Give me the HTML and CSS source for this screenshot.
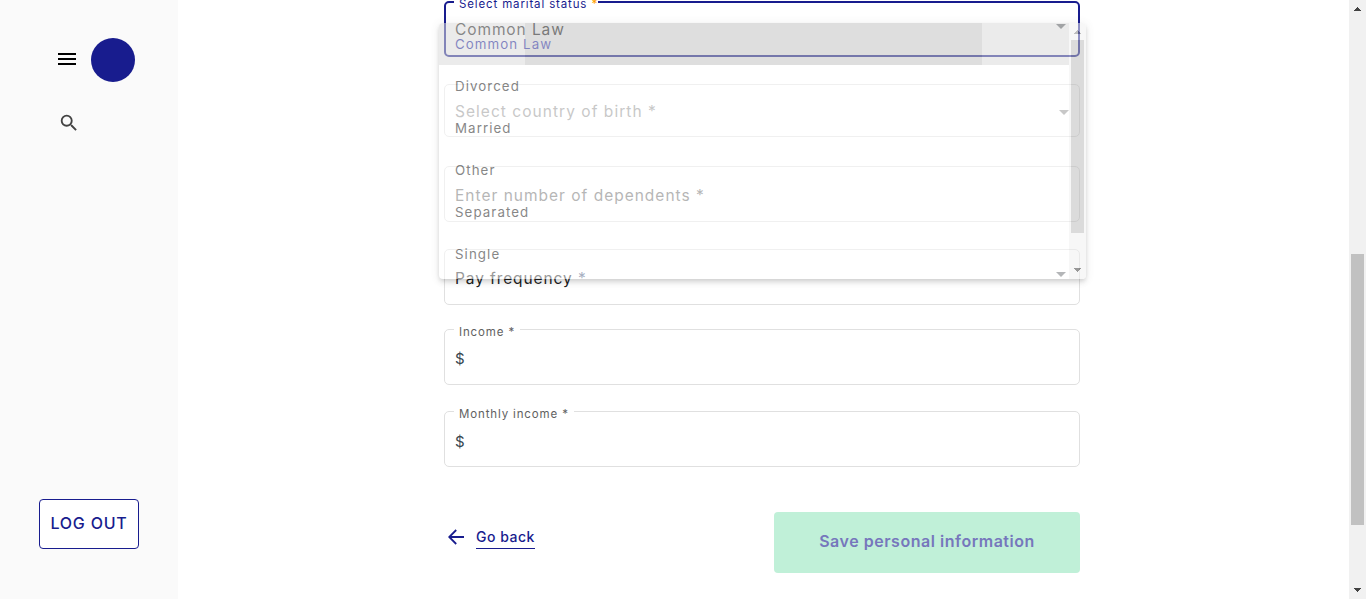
FILE: index.html
```html
<!DOCTYPE html>
<html lang="en">
<head>
<meta charset="utf-8">
<title>Personal information</title>
<link rel="stylesheet" href="styles.css">
</head>
<body>
<div class="app">
  <aside class="sidebar">
    <div class="brand">
      <svg class="menu-icon" width="18" height="12" viewBox="0 0 18 12"><path d="M0 0h18v2H0zM0 5h18v2H0zM0 10h18v2H0z"/></svg>
      <span class="avatar"></span>
    </div>
    <svg class="search-icon" width="22" height="22" viewBox="0 0 24 24"><path d="M15.5 14h-.79l-.28-.27A6.471 6.471 0 0 0 16 9.5 6.5 6.5 0 1 0 9.5 16c1.61 0 3.09-.59 4.23-1.57l.27.28v.79l5 4.99L20.49 19l-4.99-5zm-6 0C7.01 14 5 11.99 5 9.5S7.01 5 9.5 5 14 7.01 14 9.5 11.99 14 9.5 14z"/></svg>
    <button class="logout">LOG OUT</button>
  </aside>
  <main class="content">
    <form class="form">
      <div class="field focused">
        <span class="label">Select marital status <b class="star">*</b></span>
        <span class="value">Common Law</span><i class="caret"></i>
      </div>
      <div class="field country">
        <span class="value faded">Select country of birth *</span><i class="caret"></i>
      </div>
      <div class="field dependents"><span class="value muted">Enter number of dependents *</span></div>
      <div class="field frequency"><span class="value">Pay frequency <span class="mark">*</span></span><i class="caret"></i></div>
      <div class="field income"><span class="label">Income *</span><span class="value money">$</span></div>
      <div class="field monthly"><span class="label">Monthly income *</span><span class="value money">$</span></div>
      <div class="actions">
        <a class="back"><svg width="16" height="16" viewBox="0 0 16 16"><path d="M16 8H1.5M8.2 1 1.2 8l7 7"/></svg><span>Go back</span></a>
        <button class="save" type="button">Save personal information</button>
      </div>
    </form>
    <div class="panel">
      <div class="options">
        <div class="option selected"><i class="ripple"></i><span>Common Law</span></div>
        <div class="option">Divorced</div>
        <div class="option">Married</div>
        <div class="option">Other</div>
        <div class="option">Separated</div>
        <div class="option">Single</div>
      </div>
      <div class="scroll">
        <svg class="arrow dim" width="7" height="4" viewBox="0 0 7 4"><path d="M3 0h1v1h1v1h1v1h1v1H0V3h1V2h1V1h1z"/></svg>
        <i class="thumb"></i>
        <svg class="arrow" width="7" height="4" viewBox="0 0 7 4"><path d="M0 0h7v1H6v1H5v1H4v1H3V3H2V2H1V1H0z"/></svg>
      </div>
    </div>
  </main>
  <div class="page-scroll">
    <svg class="arrow" width="7" height="4" viewBox="0 0 7 4"><path d="M3 0h1v1h1v1h1v1h1v1H0V3h1V2h1V1h1z"/></svg>
    <i class="page-thumb"></i>
    <svg class="arrow" width="7" height="4" viewBox="0 0 7 4"><path d="M0 0h7v1H6v1H5v1H4v1H3V3H2V2H1V1H0z"/></svg>
  </div>
</div>
</body>
</html>
```
FILE: styles.css
```css
* { box-sizing: border-box; }
body { margin: 0; font-family: Inter, "Liberation Sans", sans-serif; color: #212121; background: #fff; overflow: hidden; }
svg { display: block; }
button { font-family: inherit; }
.app { display: flex; height: 599px; }
.sidebar { width: 178px; background: #fafafa; display: flex; flex-direction: column; padding: 38px 39px 50px; }
.brand { display: flex; align-items: center; gap: 15px; padding-left: 19px; }
.menu-icon { margin-top: -2px; }
.avatar { width: 44px; height: 44px; border-radius: 50%; background: #181c8e; }
.search-icon { margin: 30px 0 0 19px; fill: #424242; }
.logout { margin-top: auto; width: 100px; height: 50px; padding: 0 0 2px; border: 1px solid #181c8e; border-radius: 4px; background: #fff; color: #181c8e; font-size: 16px; font-weight: 500; letter-spacing: .8px; white-space: nowrap; }
.content { position: relative; flex: 1; padding: 1px 0 0 266px; }
.form { width: 636px; }
.field { position: relative; height: 56px; border: 1px solid #e0e0e0; border-radius: 5px; display: flex; justify-content: space-between; padding: 0 13px 0 10px; font-size: 15.5px; letter-spacing: .9px; line-height: 20px; }
.field.focused { border: 2px solid #181c8e; padding: 17px 12px 0 9px; }
.label { position: absolute; left: 9px; top: -8px; height: 20px; padding: 0 5px; background: #fff; font-size: 11.5px; line-height: 20px; letter-spacing: .86px; color: #616161; white-space: nowrap; }
.focused .label { left: 8px; top: -9px; color: #181c8e; padding-right: 0; }
.star { color: #ffa000; font-weight: 500; }
.caret { width: 10px; height: 5px; background: #5b6164; clip-path: polygon(0 0, 100% 0, 50% 100%); }
.focused .caret { margin-top: 4px; }
.country { margin-top: 27px; height: 53px; padding: 17px 10px 0; letter-spacing: 1.04px; }
.country .caret { margin-top: 8px; background: #888; }
.faded { color: #888; }
.dependents { margin-top: 29px; padding-top: 19px; letter-spacing: 1px; }
.muted { color: #616161; }
.frequency { margin-top: 27px; padding-top: 19px; }
.frequency .caret { margin-top: 3px; }
.mark { color: #3c5078; }
.income { margin-top: 24px; padding-top: 19px; }
.monthly { margin-top: 26px; padding-top: 20px; }
.money { color: #37474f; font-size: 15px; }
.actions { display: flex; justify-content: space-between; margin-top: 45px; }
.back { display: flex; align-items: flex-start; gap: 12px; padding: 17px 0 0 4px; color: #181c8e; font-size: 14px; font-weight: 500; letter-spacing: .5px; }
.back svg { fill: none; stroke: #181c8e; stroke-width: 1.8; }
.back span { height: 20px; line-height: 15px; border-bottom: 1px solid #181c8e; }
.save { width: 306px; height: 61px; padding: 0 0 3px; border: 0; border-radius: 4px; background: #c0f0d8; color: #7677bc; font-size: 16px; font-weight: 600; letter-spacing: .53px; }
.panel { position: absolute; left: 261px; top: 23px; width: 647px; height: 256px; display: flex; overflow: hidden; border-radius: 4px; background: #fff; opacity: .54; box-shadow: 0 2px 4px -1px rgba(0,0,0,.2), 0 4px 5px rgba(0,0,0,.14), 0 1px 10px rgba(0,0,0,.12); }
.options { flex: 1; font-size: 13.3px; letter-spacing: 1.08px; }
.option { position: relative; height: 42px; line-height: 42px; padding-left: 16px; color: #212121; }
.selected { background: #dcdcdc; color: #181c8e; }
.selected span { position: relative; }
.ripple { position: absolute; left: 86px; top: 0; width: 457px; height: 42px; background: #c4c4c4; }
.scroll { width: 17px; background: #f1f1f1; display: flex; flex-direction: column; align-items: center; padding: 7px 0; }
.thumb { width: 13px; height: 193px; margin-top: 6px; background: #bdbdbd; }
.arrow { fill: #424242; }
.arrow.dim { fill: #888; }
.scroll .arrow:last-child { margin-top: auto; }
.page-scroll { width: 17px; background: #f1f1f1; display: flex; flex-direction: column; align-items: center; padding: 7px 0; }
.page-thumb { width: 13px; height: 271px; margin-top: 243px; background: #c1c1c1; }
.page-scroll .arrow:last-child { margin-top: auto; }
```
